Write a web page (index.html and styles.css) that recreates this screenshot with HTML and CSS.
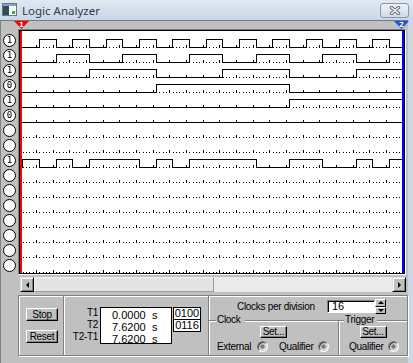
FILE: index.html
```html
<!DOCTYPE html>
<html lang="en">
<head>
    <meta charset="UTF-8">
    <meta name="viewport" content="width=device-width, initial-scale=1.0">
    <title>Logic Analyzer</title>
    <link rel="stylesheet" href="styles.css">
</head>
<body>
    <div class="window">
        <div class="titlebar">
            <svg class="app-icon" viewBox="0 0 15 14" shape-rendering="crispEdges">
                <rect x="0.5" y="0.5" width="14" height="12" fill="#fff" stroke="#6b7785"/>
                <rect x="1" y="1" width="13" height="2" fill="#8aa2c2"/>
                <rect x="1" y="3" width="6" height="9" fill="#2c4f55"/>
                <rect x="10" y="8" width="3" height="3" fill="#3cb043"/>
            </svg>
            <span class="title">Logic Analyzer</span>
            <div class="close-btn">
                <svg width="12" height="9" viewBox="0 0 12 9">
                    <path d="M2.5 1.5 L9.5 7.5 M9.5 1.5 L2.5 7.5" stroke="#5f6b7b" stroke-width="3.4" stroke-linecap="round"/>
                    <path d="M2.5 1.5 L9.5 7.5 M9.5 1.5 L2.5 7.5" stroke="#eef1f5" stroke-width="1.6" stroke-linecap="round"/>
                </svg>
            </div>
        </div>
        <div class="frame">
            <div class="client">
                <div class="marks">
                    <svg class="mark" viewBox="0 0 15 8">
                        <polygon points="0,0 15,0 7.5,8" fill="#f00"/>
                        <text x="7.5" y="6" class="mark-num">1</text>
                    </svg>
                    <svg class="mark" viewBox="0 0 15 8">
                        <polygon points="0,0 15,0 7.5,8" fill="#1d4fe0"/>
                        <text x="7.5" y="6" class="mark-num">2</text>
                    </svg>
                </div>
                <div class="scope">
                    <div class="probes">
                        <div class="probe">1</div>
                        <div class="probe">1</div>
                        <div class="probe">1</div>
                        <div class="probe">0</div>
                        <div class="probe">1</div>
                        <div class="probe">0</div>
                        <div class="probe"></div>
                        <div class="probe"></div>
                        <div class="probe">1</div>
                        <div class="probe"></div>
                        <div class="probe"></div>
                        <div class="probe"></div>
                        <div class="probe"></div>
                        <div class="probe"></div>
                        <div class="probe"></div>
                        <div class="probe"></div>
                    </div>
                    <div class="trace-well">
                        <div class="trace-box">
                            <svg class="traces" width="384" height="242" viewBox="0 0 384 242" shape-rendering="crispEdges">
                                <defs>
                                    <pattern id="grid" x="16" y="2" width="50" height="15" patternUnits="userSpaceOnUse">
                                        <path d="M0 12h1v3h-1z M17 12h1v3h-1z M33 12h1v3h-1z M3 14h1v1h-1z M7 14h1v1h-1z M10 14h1v1h-1z M13 14h1v1h-1z M20 14h1v1h-1z M23 14h1v1h-1z M27 14h1v1h-1z M30 14h1v1h-1z M37 14h1v1h-1z M40 14h1v1h-1z M43 14h1v1h-1z M47 14h1v1h-1z" fill="#000"/>
                                    </pattern>
                                </defs>
                                <rect x="0" y="2" width="384" height="240" fill="url(#grid)"/>
                                <g fill="none" stroke="#000" stroke-width="1">
                                    <!-- clock -->
                                    <path d="M0 16.5 H19.5 V8.5 H36.5 V16.5 H52.5 V8.5 H69.5 V16.5 H86.5 V8.5 H102.5 V16.5 H119.5 V8.5 H136.5 V16.5 H152.5 V8.5 H169.5 V16.5 H186.5 V8.5 H202.5 V16.5 H219.5 V8.5 H236.5 V16.5 H252.5 V8.5 H269.5 V16.5 H286.5 V8.5 H302.5 V16.5 H319.5 V8.5 H336.5 V16.5 H352.5 V8.5 H369.5 V16.5 H384"/>
                                    <!-- counter bits -->
                                    <path d="M0 31.5 H36.5 V23.5 H69.5 V31.5 H102.5 V23.5 H136.5 V31.5 H169.5 V23.5 H202.5 V31.5 H236.5 V23.5 H269.5 V31.5 H302.5 V23.5 H336.5 V31.5 H369.5 V23.5 H384"/>
                                    <path d="M0 46.5 H69.5 V38.5 H136.5 V46.5 H202.5 V38.5 H269.5 V46.5 H336.5 V38.5 H384"/>
                                    <path d="M0 61.5 H136.5 V53.5 H269.5 V61.5 H384"/>
                                    <path d="M0 76.5 H269.5 V68.5 H384"/>
                                    <path d="M0 91.5 H384"/>
                                    <!-- qualifier -->
                                    <path d="M2.5 136.5 V128.5 H19.5 V136.5 H36.5 V128.5 H52.5 V136.5 H69.5 V128.5 H119.5 V136.5 H136.5 V128.5 H152.5 V136.5 H169.5 V128.5 H236.5 V136.5 H269.5 V128.5 H302.5 V136.5 H336.5 V128.5 H352.5 V136.5 H369.5 V128.5 H384"/>
                                </g>
                                <rect x="0" y="0" width="2" height="242" fill="#f00"/>
                                <rect x="382" y="0" width="2" height="242" fill="#00f"/>
                            </svg>
                        </div>
                    </div>
                </div>
                <div class="hscroll">
                    <div class="sb-btn"><span class="arrow-left"></span></div>
                    <div class="sb-thumb"></div>
                    <div class="sb-track"></div>
                    <div class="sb-btn"><span class="arrow-right"></span></div>
                </div>
                <div class="panel">
                    <div class="run">
                        <button class="btn btn-run">Stop</button>
                        <button class="btn btn-run">Reset</button>
                    </div>
                    <div class="times">
                        <div class="time-labels">
                            <div>T1</div>
                            <div>T2</div>
                            <div>T2-T1</div>
                        </div>
                        <div class="time-box">
                            <div class="time-row"><span class="time-val">0.0000</span><span>s</span></div>
                            <div class="time-row"><span class="time-val">7.6200</span><span>s</span></div>
                            <div class="time-row"><span class="time-val">7.6200</span><span>s</span></div>
                        </div>
                        <div class="counts">
                            <div class="count">0100</div>
                            <div class="count">0116</div>
                        </div>
                    </div>
                    <div class="clocking">
                        <div class="cpd">
                            <span class="cpd-label">Clocks per division</span>
                            <div class="spin-field">16</div>
                            <div class="spinner">
                                <div class="spin-btn"><span class="arrow-up"></span></div>
                                <div class="spin-btn"><span class="arrow-down"></span></div>
                            </div>
                        </div>
                        <div class="groups">
                            <div class="group group-clock">
                                <span class="legend">Clock</span>
                                <button class="btn btn-set">Set...</button>
                                <div class="opt-row">
                                    <span class="opt-ext">External</span>
                                    <span class="radio"></span>
                                    <span class="opt-qual">Qualifier</span>
                                    <span class="radio"></span>
                                </div>
                            </div>
                            <div class="group group-trigger">
                                <span class="legend">Trigger</span>
                                <button class="btn btn-set">Set...</button>
                                <div class="opt-row">
                                    <span class="opt-qual">Qualifier</span>
                                    <span class="radio"></span>
                                </div>
                            </div>
                        </div>
                    </div>
                </div>
            </div>
            <div class="frame-edge"></div>
        </div>
    </div>
</body>
</html>
```

FILE: styles.css
```css
* {
    margin: 0;
    padding: 0;
    box-sizing: border-box;
}

body {
    width: 413px;
    height: 363px;
    overflow: hidden;
    background-color: #c0c0c0;
    font-family: "Liberation Sans", Arial, sans-serif;
    font-size: 10px;
    letter-spacing: -0.3px;
    color: #000;
}

.window {
    width: 413px;
    height: 363px;
    display: flex;
    flex-direction: column;
    background-color: #cdd9e8;
}

.titlebar {
    height: 20px;
    flex: none;
    display: flex;
    align-items: center;
    padding: 0 4px 0 2px;
    background: linear-gradient(#dfe8f3, #cad7e8);
}

.app-icon {
    width: 15px;
    height: 14px;
    margin-right: 5px;
}

.title {
    flex: 1;
    font-family: "Noto Sans", sans-serif;
    font-size: 11.5px;
    letter-spacing: 0;
    color: #2e3b4c;
}

.close-btn {
    width: 29px;
    height: 15px;
    border: 1px solid #8a97aa;
    border-radius: 3px;
    background: linear-gradient(#edf2f8, #d0dbe9);
    display: flex;
    align-items: center;
    justify-content: center;
}

.frame {
    flex: 1;
    display: flex;
}

.client {
    width: 408px;
    background-color: #c0c0c0;
    border-top: 1px solid #6f7b8a;
    border-left: 1px solid #808080;
    display: flex;
    flex-direction: column;
}

.frame-edge {
    flex: 1;
}

/* cursor markers */
.marks {
    flex: none;
    height: 8px;
    width: 395px;
    margin-left: 13px;
    display: flex;
    justify-content: space-between;
    position: relative;
    z-index: 1;
}

.mark {
    display: block;
    width: 15px;
    height: 8px;
}

.mark-num {
    font-family: "DejaVu Sans", sans-serif;
    font-size: 7px;
    font-weight: bold;
    fill: #fff;
    text-anchor: middle;
    letter-spacing: 0;
}

/* probes and traces */
.scope {
    flex: none;
    height: 246px;
    display: flex;
}

.probes {
    width: 17px;
    padding: 5px 0 0 2px;
    display: flex;
    flex-direction: column;
    gap: 2px;
}

.probe {
    width: 13px;
    height: 13px;
    border: 1px solid #000;
    border-radius: 50%;
    background-color: #fff;
    font-family: "DejaVu Sans Mono", monospace;
    font-size: 9px;
    line-height: 11px;
    text-align: center;
    letter-spacing: 0;
}

.trace-well {
    width: 388px;
    height: 246px;
    border: 1px solid;
    border-color: #808080 #fff #fff #808080;
}

.trace-box {
    height: 100%;
    border: 1px solid #000;
    background-color: #fff;
}

.traces {
    display: block;
}

/* scrollbar */
.hscroll {
    flex: none;
    display: flex;
    width: 386px;
    height: 15px;
    margin: 2px 0 0 19px;
}

.sb-btn {
    width: 14px;
    height: 15px;
    background-color: #c0c0c0;
    border: 1px solid;
    border-color: #dfdfdf #000 #000 #dfdfdf;
    box-shadow: inset 1px 1px #fff, inset -1px -1px #808080;
    display: flex;
    align-items: center;
    justify-content: center;
}

.sb-thumb {
    width: 180px;
    background-color: #e4e4e4;
    border: 1px solid;
    border-color: #f4f4f4 #9a9a9a #9a9a9a #f4f4f4;
}

.sb-track {
    flex: 1;
    background-color: #ebebeb;
}

.arrow-left, .arrow-right {
    width: 0;
    height: 0;
    border-top: 3px solid transparent;
    border-bottom: 3px solid transparent;
}

.arrow-left {
    border-right: 3px solid #000;
}

.arrow-right {
    border-left: 3px solid #000;
}

/* control panel */
.panel {
    flex: none;
    width: 390px;
    height: 61px;
    margin: 3px 0 0 17px;
    border: 1px solid #808080;
    box-shadow: inset 1px 1px #fff, 1px 1px #fff;
    display: flex;
}

.btn {
    font: inherit;
    letter-spacing: inherit;
    color: #000;
    background-color: #c0c0c0;
    border: 1px solid;
    border-color: #fff #000 #000 #fff;
    box-shadow: inset -1px -1px #808080;
}

.run {
    width: 45px;
    border-right: 1px solid #808080;
    padding: 12px 0 0 7px;
    display: flex;
    flex-direction: column;
    gap: 9px;
}

.btn-run {
    width: 32px;
    height: 13px;
    line-height: 11px;
}

.times {
    width: 145px;
    border-right: 1px solid #808080;
    box-shadow: inset 1px 0 #fff;
    display: flex;
    align-items: flex-start;
    padding: 11px 0 0 1px;
}

.time-labels {
    width: 33px;
    margin-right: 2px;
    text-align: right;
    line-height: 12px;
}

.time-box {
    width: 72px;
    height: 37px;
    border: 1px solid #000;
    background-color: #fff;
    padding: 1px 0 0 11px;
    font-size: 11px;
    letter-spacing: 0;
    line-height: 12px;
}

.time-row {
    display: flex;
}

.time-val {
    width: 40px;
}

.counts {
    width: 28px;
    margin-left: 1px;
    border: 1px solid #000;
    background-color: #fff;
    font-size: 11px;
    letter-spacing: 0;
}

.count {
    height: 11px;
    line-height: 11px;
    text-align: center;
}

.count:first-child {
    height: 12px;
    border-bottom: 1px solid #000;
}

.clocking {
    flex: 1;
    box-shadow: inset 1px 0 #fff;
    display: flex;
    flex-direction: column;
}

.cpd {
    height: 15px;
    margin-top: 3px;
    padding-left: 28px;
    display: flex;
    align-items: center;
}

.cpd-label {
    width: 90px;
}

.spin-field {
    width: 48px;
    height: 13px;
    background-color: #fff;
    border: 1px solid;
    border-color: #808080 #fff #fff #808080;
    box-shadow: inset 1px 1px #000;
    padding-left: 4px;
    font-size: 11px;
    letter-spacing: 0;
    line-height: 11px;
}

.spinner {
    width: 11px;
    height: 15px;
    display: flex;
    flex-direction: column;
}

.spin-btn {
    flex: 1;
    background-color: #c0c0c0;
    border: 1px solid;
    border-color: #fff #000 #000 #fff;
    display: flex;
    align-items: center;
    justify-content: center;
}

.arrow-up, .arrow-down {
    width: 0;
    height: 0;
    border-left: 3px solid transparent;
    border-right: 3px solid transparent;
}

.arrow-up {
    border-bottom: 3px solid #000;
}

.arrow-down {
    border-top: 3px solid #000;
}

.groups {
    flex: 1;
    margin-top: 6px;
    display: flex;
}

.group {
    border-top: 1px solid #808080;
    box-shadow: inset 0 1px #fff;
    display: flex;
    flex-direction: column;
    align-items: center;
}

.group-clock {
    width: 130px;
    border-right: 1px solid #808080;
}

.group-trigger {
    flex: 1;
    box-shadow: inset 0 1px #fff, inset 1px 0 #fff;
}

.legend {
    align-self: flex-start;
    margin: -7px 0 0 7px;
    padding: 0 4px 0 1px;
    background-color: #c0c0c0;
    line-height: 12px;
}

.group-trigger .legend {
    margin-left: 5px;
    padding-right: 3px;
}

.btn-set {
    width: 27px;
    height: 12px;
    line-height: 10px;
}

.opt-row {
    align-self: stretch;
    height: 12px;
    margin-top: 2px;
    padding-left: 8px;
    display: flex;
    align-items: center;
}

.group-trigger .opt-row {
    padding-left: 10px;
}

.opt-ext {
    width: 40px;
}

.opt-qual {
    width: 39px;
}

.radio + .opt-qual {
    margin-left: 11px;
}

.radio {
    width: 11px;
    height: 11px;
    border-radius: 50%;
    border: 1px solid;
    border-color: #808080 #fff #fff #808080;
    box-shadow: inset 1px 1px #404040;
    background: radial-gradient(circle, #7a7a7a 0 1.8px, #d2d2d2 2.4px);
}
```
